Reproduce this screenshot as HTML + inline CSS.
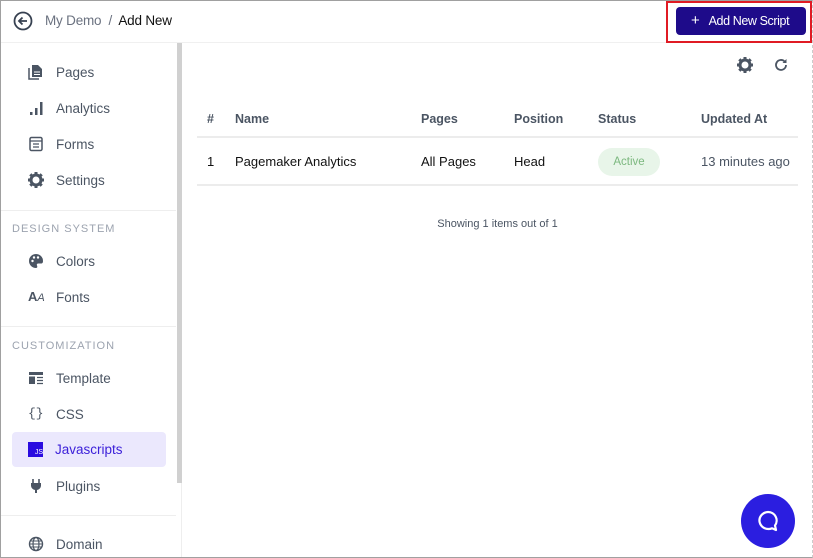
<!DOCTYPE html>
<html><head><style>
*{margin:0;padding:0;box-sizing:border-box}
body{width:813px;height:558px;overflow:hidden;background:#fff;font-family:"Liberation Sans",sans-serif;color:#374151;position:relative}
.frame{position:absolute;left:0;top:0;width:813px;height:558px;border:1px solid #a0a0a0;border-right:1px dashed #ccc}
.hdr{position:absolute;left:1px;top:1px;right:1px;height:42px;border-bottom:1px solid #f0f0f0}
.bc{position:absolute;left:45px;top:13px;font-size:13.5px;color:#6b7280;letter-spacing:-0.2px}
.bc b{font-weight:normal;color:#111}
.btn{position:absolute;left:676px;top:7px;width:130px;height:28px;background:#1e0b8a;border-radius:4px;color:#fff;font-size:12.5px;line-height:28px;padding-left:15px;letter-spacing:-0.4px}
.red{position:absolute;left:666px;top:1px;width:146px;height:42px;border:2px solid #e01b24}
.side{position:absolute;left:1px;top:43px;width:181px;height:514px;border-right:1px solid #eee}
.sb{position:absolute;left:177px;top:43px;width:5px;height:440px;background:#d0d0d0}
.it{position:absolute;left:28px;font-size:13.5px;color:#4b5563;display:flex;align-items:center}
.it i{display:inline-block;width:16px;height:16px;margin-right:12px;font-style:normal}
.sec{position:absolute;left:12px;font-size:11px;letter-spacing:1px;color:#9ca3af}
.div{position:absolute;left:1px;width:175px;height:1px;background:#eee}
.act{position:absolute;left:12px;top:432px;width:154px;height:35px;background:#ebe8fd;border-radius:4px}
.tbl{position:absolute;left:197px;top:100px;width:601px}
.hrow{position:absolute;left:0;top:0;width:601px;height:38px;border-bottom:2px solid #ececec;font-weight:bold;color:#4b5563}
.row{position:absolute;left:0;top:38px;width:601px;height:48px;border-bottom:2px solid #ececec;color:#111}
.c{position:absolute;font-size:12.5px}
.hrow .c{top:12px}
.row .c{top:16px;font-size:13px}
.badge{position:absolute;left:401px;top:10px;width:62px;height:28px;border-radius:14px;background:#e8f5e9;color:#7cb87f;font-size:11.5px;text-align:center;line-height:28px}
.chat{position:absolute;left:741px;top:494px;width:54px;height:54px;border-radius:50%;background:#2b1ee0}
</style></head><body>
<div class="hdr"></div>
<svg style="position:absolute;left:13px;top:11px" width="20" height="20" viewBox="0 0 20 20"><circle cx="10" cy="10" r="8.5" fill="none" stroke="#374151" stroke-width="1.8"/><path d="M14 10H6M9.5 6.5L6 10l3.5 3.5" fill="none" stroke="#374151" stroke-width="1.8"/></svg>
<div class="bc">My Demo &nbsp;/&nbsp; <b>Add New</b></div>
<div class="btn"><span style="font-size:15px">+</span>&nbsp;&nbsp;&nbsp;Add New Script</div>
<div class="red"></div>
<div class="side"></div>
<div class="sb"></div>
<div class="it" style="top:64px"><i><svg width="16" height="16"><path d="M4 1h6l4 4v8H4z" fill="#4b5563"/><path d="M1 4v11h10" fill="none" stroke="#4b5563" stroke-width="1.5"/><path d="M6 8h6M6 10.5h6" stroke="#fff"/></svg></i>Pages</div>
<div class="it" style="top:100px"><i><svg width="16" height="16"><rect x="2" y="12" width="2.5" height="3" fill="#4b5563"/><rect x="7" y="8" width="2.5" height="7" fill="#4b5563"/><rect x="12" y="2" width="2.5" height="13" fill="#4b5563"/></svg></i>Analytics</div>
<div class="it" style="top:136px"><i><svg width="16" height="16"><rect x="2" y="1.5" width="12" height="13" rx="1.5" fill="none" stroke="#4b5563" stroke-width="1.5"/><path d="M2 5h12M5 8h6M5 11h6" stroke="#4b5563" stroke-width="1.3"/></svg></i>Forms</div>
<div class="it" style="top:172px"><i><svg width="16" height="16" viewBox="0 0 16 16"><circle cx="8" cy="8" r="5" fill="none" stroke="#4b5563" stroke-width="3"/><path d="M8 0v4M8 12v4M0 8h4M12 8h4M2.3 2.3l2.8 2.8M10.9 10.9l2.8 2.8M2.3 13.7l2.8-2.8M10.9 5.1l2.8-2.8" stroke="#4b5563" stroke-width="3"/></svg></i>Settings</div>
<div class="div" style="top:210px"></div>
<div class="sec" style="top:223px">DESIGN SYSTEM</div>
<div class="it" style="top:253px"><i><svg width="16" height="16"><path d="M8 1a7 7 0 1 0 0 14c1.5 0 1.5-1.5 1-2.5s0-2 1.5-2H13c1.5 0 2-1 2-2.5A7 7 0 0 0 8 1z" fill="#4b5563"/><circle cx="4.5" cy="8" r="1.2" fill="#fff"/><circle cx="6" cy="4.5" r="1.2" fill="#fff"/><circle cx="10" cy="4.5" r="1.2" fill="#fff"/></svg></i>Colors</div>
<div class="it" style="top:289px"><i style="font-size:13px;font-weight:bold;color:#4b5563">A<span style="font-style:italic;font-weight:normal;font-size:11px">A</span></i>Fonts</div>
<div class="div" style="top:326px"></div>
<div class="sec" style="top:340px">CUSTOMIZATION</div>
<div class="it" style="top:370px"><i><svg width="16" height="16"><rect x="1" y="2" width="14" height="3" fill="#4b5563"/><rect x="1" y="6.5" width="6" height="7.5" fill="#4b5563"/><path d="M9 7.5h6M9 10.5h6M9 13.5h6" stroke="#4b5563" stroke-width="1.3"/></svg></i>Template</div>
<div class="it" style="top:406px"><i style="font-family:'Liberation Mono',monospace;font-size:13px;color:#4b5563">{}</i>CSS</div>
<div class="act"></div>
<div class="it" style="top:442px;color:#3b1fd9"><i style="background:#2a0be0;color:#fff;font-size:7px;text-align:right;line-height:22px;height:15px;width:15px;overflow:hidden">JS</i>Javascripts</div>
<div class="it" style="top:478px"><i><svg width="16" height="16"><path d="M5 1v4M11 1v4" stroke="#4b5563" stroke-width="1.6"/><path d="M3 5h10v3a5 5 0 0 1-4 4v3H7v-3a5 5 0 0 1-4-4z" fill="#4b5563"/></svg></i>Plugins</div>
<div class="div" style="top:515px"></div>
<div class="it" style="top:536px"><i><svg width="16" height="16"><circle cx="8" cy="8" r="6.5" fill="none" stroke="#4b5563" stroke-width="1.4"/><ellipse cx="8" cy="8" rx="3" ry="6.5" fill="none" stroke="#4b5563" stroke-width="1.2"/><path d="M1.5 8h13M2.5 5h11M2.5 11h11" stroke="#4b5563" stroke-width="1.1"/></svg></i>Domain</div>

<svg style="position:absolute;left:737px;top:57px" width="16" height="16" viewBox="0 0 16 16"><circle cx="8" cy="8" r="5" fill="none" stroke="#4b5563" stroke-width="3"/><path d="M8 0v4M8 12v4M0 8h4M12 8h4M2.3 2.3l2.8 2.8M10.9 10.9l2.8 2.8M2.3 13.7l2.8-2.8M10.9 5.1l2.8-2.8" stroke="#4b5563" stroke-width="3"/></svg>
<svg style="position:absolute;left:774px;top:58px" width="14" height="14" viewBox="0 0 14 14"><path d="M12 7a5 5 0 1 1-1.5-3.6" fill="none" stroke="#4b5563" stroke-width="1.8"/><path d="M12.5 1v4h-4z" fill="#4b5563"/></svg>

<div class="tbl">
<div class="hrow"><span class="c" style="left:10px">#</span><span class="c" style="left:38px">Name</span><span class="c" style="left:224px">Pages</span><span class="c" style="left:317px">Position</span><span class="c" style="left:401px">Status</span><span class="c" style="left:504px">Updated At</span></div>
<div class="row"><span class="c" style="left:10px">1</span><span class="c" style="left:38px">Pagemaker Analytics</span><span class="c" style="left:224px">All Pages</span><span class="c" style="left:317px">Head</span><div class="badge">Active</div><span class="c" style="left:504px;color:#4b5563">13 minutes ago</span></div>
</div>
<div style="position:absolute;left:197px;width:601px;top:218px;text-align:center;font-size:11px;color:#4b5563">Showing 1 items out of 1</div>
<div class="chat"><svg style="position:absolute;left:15px;top:15px" width="24" height="24" viewBox="0 0 24 24"><path d="M12 3a9 8.5 0 1 0 4 16.3L20 21l-1-4.5A8.5 8.5 0 0 0 12 3z" fill="none" stroke="#fff" stroke-width="2.2" stroke-linejoin="round"/></svg></div>
<div class="frame"></div>
</body></html>
